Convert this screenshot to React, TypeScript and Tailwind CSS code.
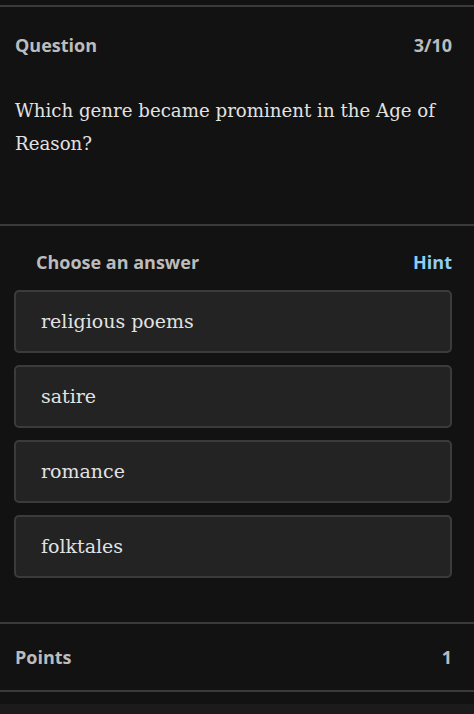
import React from 'react';

const answers = ['religious poems', 'satire', 'romance', 'folktales'];

export default function App() {
  return (
    <div className="w-[474px] h-[714px] bg-[#121212] overflow-hidden flex flex-col">
      <div className="h-[5px] shrink-0" />
      {/* Question card */}
      <div className="border-t-2 border-[#3a3a3a] pl-[15px] pr-[20px] pt-[25px] pb-[64px]">
        <div className="flex justify-between items-center pr-[2px] text-[18px] font-bold text-[#bcbcbc] font-['Open_Sans',sans-serif]">
          <span>Question</span>
          <span>3/10</span>
        </div>
        <p className="mt-[35px] text-[18.2px] leading-[33px] text-[#e2e2e2] font-['DejaVu_Serif',serif]">
          Which genre became prominent in the Age of Reason?
        </p>
      </div>

      {/* Answers */}
      <div className="border-t-2 border-[#3a3a3a] pl-[14px] pr-[22px] pt-[23px] pb-[44px]">
        <div className="flex justify-between items-center pl-[22px] text-[18px] font-bold font-['Open_Sans',sans-serif]">
          <span className="text-[#bcbcbc]">Choose an answer</span>
          <span className="text-[#8fcdf2]">Hint</span>
        </div>
        <div className="mt-[14px] flex flex-col gap-[12px]">
          {answers.map((a) => (
            <div
              key={a}
              className="h-[63px] flex items-center px-[25px] rounded-[5px] border-2 border-[#3b3b3b] bg-[#232323] text-[19px] text-[#e2e2e2] font-['DejaVu_Serif',serif]"
            >
              {a}
            </div>
          ))}
        </div>
      </div>

      {/* Points */}
      <div className="border-t-2 border-b-2 border-[#3a3a3a] h-[70px] pl-[15px] pr-[22px] flex justify-between items-center text-[18px] font-bold text-[#bcbcbc] font-['Open_Sans',sans-serif]">
        <span>Points</span>
        <span>1</span>
      </div>
      <div className="h-[12px]" />
      <div className="flex-1 bg-[#1b1b1b]" />
    </div>
  );
}
